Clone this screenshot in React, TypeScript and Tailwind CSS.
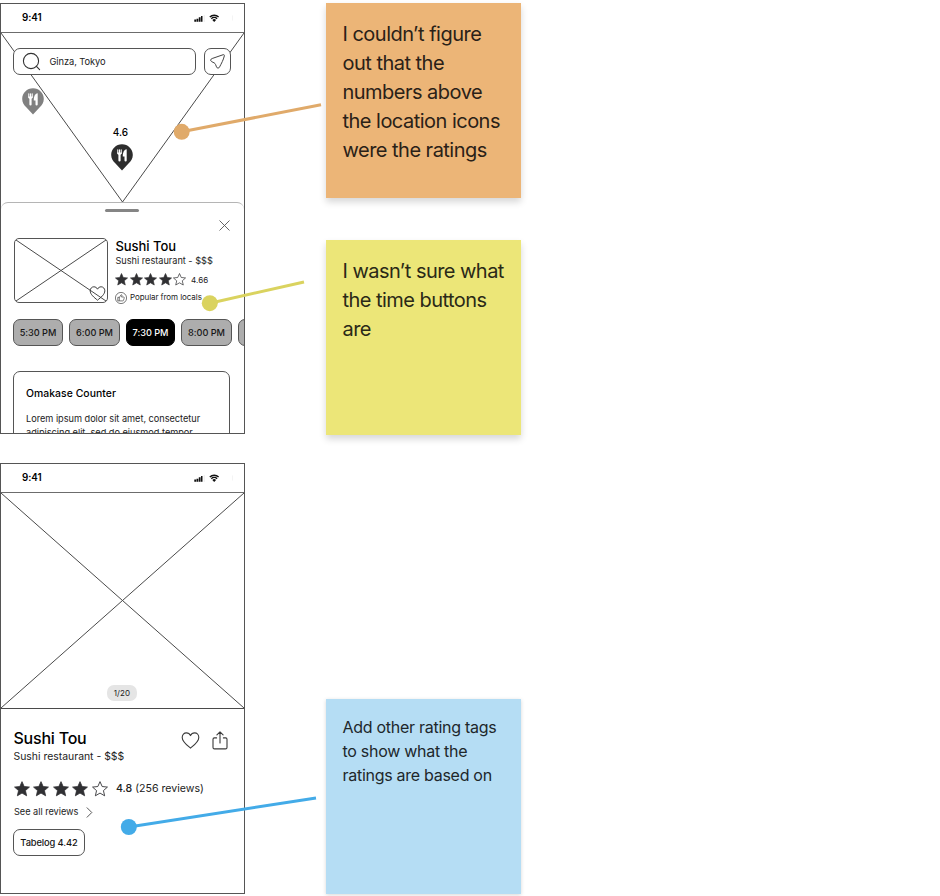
import React from "react";

const STAR =
  "M10 .8L12.7 6.9 19.3 7.6 14.3 12 15.8 18.5 10 15.1 4.2 18.5 5.7 12 .7 7.6 7.3 6.9z";

function Stars({ size, gap }: { size: number; gap: string }) {
  return (
    <div className={`flex ${gap}`}>
      {[0, 1, 2, 3, 4].map((i) => (
        <svg key={i} width={size} height={size} viewBox="0 0 20 20" className="shrink-0">
          <path
            d={STAR}
            fill={i < 4 ? "#303033" : "none"}
            stroke="#303033"
            strokeWidth={i < 4 ? 1 : 1.1}
            strokeLinejoin="round"
          />
        </svg>
      ))}
    </div>
  );
}

function Pin({ color }: { color: string }) {
  return (
    <svg width="22" height="27" viewBox="0 0 22 27" className="block">
      <path
        d="M11 0.2C5 0.2.2 5 .2 10.9c0 3.6 1.8 6.4 4.3 8.6L11 26.4l6.5-6.9c2.5-2.2 4.3-5 4.3-8.6C21.8 5 17 .2 11 .2z"
        fill={color}
      />
      <path
        d="M6.8 5.8v3.4M8.5 5.8v3.4M10.2 5.8v3.4"
        stroke="#fff"
        strokeWidth="1.1"
        strokeLinecap="round"
      />
      <path d="M6.3 8.4h4.4c0 1.4-.5 2-1.1 2.4v5.7a1.1 1.1 0 01-2.2 0v-5.7c-.7-.4-1.1-1-1.1-2.4z" fill="#fff" />
      <path d="M15.7 5.2v11.3a1.1 1.1 0 01-2.2 0v-4h-1.7c0-3.9 1-6.8 3.9-7.3z" fill="#fff" />
    </svg>
  );
}

function Heart({ width, height }: { width: number; height: number }) {
  return (
    <svg width={width} height={height} viewBox="0 0 18 17" className="block">
      <path
        d="M9 16.1C5.2 12.9.7 9.6.7 5.4.7 2.8 2.6.9 4.9.9 6.7.9 8.2 1.9 9 3.6 9.8 1.9 11.3.9 13.1.9c2.3 0 4.2 1.9 4.2 4.5 0 4.2-4.5 7.5-8.3 10.7z"
        fill="none"
        stroke="#3a3a3a"
        strokeWidth="1.1"
        strokeLinejoin="round"
      />
    </svg>
  );
}

function StatusBar() {
  return (
    <div className="flex h-[29px] shrink-0 items-center border-b border-[#6c6c6c] bg-white pl-[21px]">
      <span className="text-[9.8px] leading-[28px] font-semibold tracking-[-0.05px] text-black">9:41</span>
      <svg width="46" height="10" viewBox="0 0 46 10" className="ml-auto mr-[4px]">
        <path d="M.3 6.4h1.8v2.4H.3zM2.5 5.7h1.8v3.1H2.5zM4.8 4.2h1.8v4.6H4.8z" fill="#111" />
        <path d="M7 2.9h1.5v5.9H7z" fill="#111" />
        <path d="M9.8 2h.8v7h-.8z" fill="#e6e6e6" />
        <path d="M20.2 8.9l-1.9-2a2.8 2.8 0 013.8 0z" fill="#111" />
        <path
          d="M15.8 4a6.3 6.3 0 018.8 0M17.3 5.7a4.2 4.2 0 015.8 0"
          fill="none"
          stroke="#111"
          strokeWidth="1.4"
        />
        <path d="M38 2.5h.8v5H38z" fill="#f1f1f1" />
      </svg>
    </div>
  );
}

function TimeSlot({ label, width, active }: { label: string; width: string; active?: boolean }) {
  return (
    <div
      className={`flex h-[27px] shrink-0 items-center justify-center rounded-[7px] border text-[9.2px] font-medium whitespace-nowrap tracking-[-0.05px] ${width} ${
        active ? "border-black bg-black text-white" : "border-[#555] bg-[#adadad] text-[#161616]"
      }`}
    >
      {label}
    </div>
  );
}

function MapScreen() {
  return (
    <div className="flex h-[431px] w-[245px] flex-col overflow-hidden border border-[#555] bg-white">
      <StatusBar />
      <div className="relative h-[169px] shrink-0">
        <svg className="absolute inset-0" width="243" height="170" viewBox="0 0 243 170">
          <path d="M0 0L121.5 169L243 0" fill="none" stroke="#4a4a4a" strokeWidth="1" />
        </svg>
        <div className="relative flex gap-[8px] pt-[15px] pl-[12px]">
          <div className="flex h-[27px] w-[183px] items-center rounded-[7px] border border-[#555] bg-white pl-[8px]">
            <svg width="19" height="19" viewBox="0 0 19 19" fill="none" stroke="#333" strokeWidth="1.1">
              <circle cx="9" cy="9" r="7.6" />
              <path d="M14.2 14.2l3.4 3.4" strokeLinecap="round" />
            </svg>
            <span className="ml-[8.5px] text-[9.3px] leading-[25px] tracking-[-0.08px] text-[#222]">
              Ginza, Tokyo
            </span>
          </div>
          <div className="flex h-[27px] w-[27px] items-center justify-center rounded-[7px] border border-[#555] bg-white">
            <svg width="17" height="17" viewBox="0 0 17 17" fill="none" stroke="#444" strokeWidth="1" strokeLinejoin="round">
              <path d="M14.2 1.7L3.2 5.5C1.3 6.2 1.2 7.7 2.6 8.6l2.6 1.3c.7.4 1 .8 1.3 1.5l1 2.5c.8 1.7 2.2 1.7 3.1 0 1.9-3.6 3.7-6.8 4.7-10.9.2-1.1-.3-1.6-1.1-1.3z" />
            </svg>
          </div>
        </div>
        <div className="absolute top-[55px] left-[20.5px]">
          <Pin color="#808080" />
        </div>
        <div className="absolute top-[92px] left-[110px] flex w-[22px] flex-col items-center">
          <span className="mr-[3px] text-[10px] leading-[14px] font-medium text-black">4.6</span>
          <div className="mt-[5px]">
            <Pin color="#2d2d2d" />
          </div>
        </div>
      </div>
      <div className="flex min-h-0 flex-1 flex-col rounded-t-[7px] border-t border-[#b5b5b5] bg-white">
        <div className="mt-[6px] ml-[104px] h-[3px] w-[34px] shrink-0 rounded-full bg-[#858585]" />
        <svg
          width="11"
          height="11"
          viewBox="0 0 11 11"
          className="mt-[8px] mr-[14px] shrink-0 self-end"
          stroke="#555"
          strokeWidth="0.9"
        >
          <path d="M.5 .5l10 10M10.5 .5l-10 10" />
        </svg>
        <div className="mt-[7px] ml-[13px] flex h-[65px] shrink-0">
          <div className="relative h-[65px] w-[94px] shrink-0 overflow-hidden rounded-[5px] border border-[#555]">
            <svg width="92" height="63" viewBox="0 0 92 63" className="block">
              <path d="M1 1L91 62M91 1L1 62" stroke="#4a4a4a" strokeWidth="1" />
            </svg>
            <div className="absolute right-[1px] bottom-[1px]">
              <Heart width={17} height={15} />
            </div>
          </div>
          <div className="ml-[7px] flex flex-col pt-[1px] whitespace-nowrap">
            <div className="pl-[0.5px] text-[13px] leading-[15px] font-medium tracking-[-0.05px] text-black">
              Sushi Tou
            </div>
            <div className="pl-[0.5px] text-[9.2px] leading-[13px] tracking-[-0.02px] text-[#222]">
              Sushi restaurant - $$$
            </div>
            <div className="flex h-[25px] items-center">
              <Stars size={13} gap="gap-[1.5px]" />
              <span className="ml-[5px] text-[8px] tracking-[0.1px] text-[#222]">4.66</span>
            </div>
            <div className="flex h-[11px] items-center">
              <svg width="12" height="12" viewBox="0 0 12 12" fill="none" stroke="#444" strokeWidth="0.7">
                <circle cx="6" cy="6" r="5.6" />
                <path
                  d="M2.8 5.3h1.5v3.6H2.8zM4.3 5.6L6 2.8c.9-.2 1.2.5.9 1.2l-.4 1h2c.8 0 .9.7.7 1.2l-.8 2.3c-.1.3-.4.4-.7.4H4.3"
                  strokeLinejoin="round"
                />
              </svg>
              <span className="ml-[3px] text-[8px] leading-[11px] tracking-[-0.07px] text-[#222]">
                Popular from locals
              </span>
            </div>
          </div>
        </div>
        <div className="mt-[16px] ml-[12px] flex shrink-0 gap-[6px] overflow-hidden">
          <TimeSlot label="5:30 PM" width="w-[50px]" />
          <TimeSlot label="6:00 PM" width="w-[51px]" />
          <TimeSlot label="7:30 PM" width="w-[49px]" active />
          <TimeSlot label="8:00 PM" width="w-[51px]" />
          <TimeSlot label="" width="w-[50px]" />
        </div>
        <div className="mt-[25px] ml-[12px] h-[120px] w-[217px] shrink-0 rounded-[7px] border border-[#555] px-[12px] pt-[15px]">
          <div className="text-[10.4px] leading-[14px] font-medium tracking-[0.05px] whitespace-nowrap text-black">
            Omakase Counter
          </div>
          <div className="mt-[11px] text-[9.2px] leading-[14px] tracking-[-0.02px] whitespace-nowrap text-[#222]">
            Lorem ipsum dolor sit amet, consectetur
            <br />
            adipiscing elit, sed do eiusmod tempor
          </div>
        </div>
      </div>
    </div>
  );
}

function DetailScreen() {
  return (
    <div className="mt-[29px] flex h-[431px] w-[245px] flex-col overflow-hidden border border-[#555] bg-white">
      <StatusBar />
      <div className="relative h-[216px] shrink-0 border-b border-[#4a4a4a]">
        <svg width="243" height="215" viewBox="0 0 243 215" className="block">
          <path d="M0 0L243 215M243 0L0 215" stroke="#4a4a4a" strokeWidth="1" />
        </svg>
        <div className="absolute bottom-[7px] left-[106px] flex h-[16px] w-[30px] items-center justify-center rounded-[7px] bg-[#e5e5e5] text-[8px] tracking-[0.1px] text-[#222]">
          1/20
        </div>
      </div>
      <div className="flex flex-col pt-[20px] pr-[16px] pl-[12px] whitespace-nowrap">
        <div className="flex justify-between pl-[0.5px]">
          <div>
            <div className="text-[16px] leading-[19px] font-medium tracking-[-0.22px] text-black">Sushi Tou</div>
            <div className="mt-[2px] text-[10.4px] leading-[14px] tracking-[0.01px] text-[#222]">
              Sushi restaurant - $$$
            </div>
          </div>
          <div className="flex gap-[12px] pt-[2px]">
            <div className="pt-[1px]">
              <Heart width={19} height={17} />
            </div>
            <svg width="16" height="19" viewBox="0 0 16 19" fill="none" stroke="#3a3a3a" strokeWidth="1.1" strokeLinecap="round" strokeLinejoin="round">
              <path d="M8 12V1M4.9 3.9L8 .8l3.1 3.1M4.6 6.9H2.4C1.4 6.9 1 7.4 1 8.3v8.1c0 1 .5 1.5 1.5 1.5h11c1 0 1.5-.5 1.5-1.5V8.3c0-.9-.4-1.4-1.4-1.4h-2.2" />
            </svg>
          </div>
        </div>
        <div className="mt-[8px] flex h-[33px] items-center pl-[0.5px]">
          <Stars size={16} gap="gap-[3.5px]" />
          <span className="ml-[8.5px] text-[10.6px] text-[#222]">
            <span className="font-medium">4.8</span> (256 reviews)
          </span>
        </div>
        <div className="flex h-[14px] items-center pl-[1px]">
          <span className="text-[9.2px] leading-[14px] tracking-[-0.03px] text-[#222]">See all reviews</span>
          <svg width="7" height="11" viewBox="0 0 7 11" className="ml-[7.5px]" fill="none" stroke="#444" strokeWidth="0.9">
            <path d="M.8 .5l5 5-5 5" />
          </svg>
        </div>
        <div className="mt-[10px] flex h-[27px] w-[72px] items-center justify-center rounded-[7px] border border-[#555] text-[9.3px] font-medium tracking-[-0.1px] text-[#161616]">
          Tabelog 4.42
        </div>
      </div>
    </div>
  );
}

function Connectors() {
  return (
    <svg className="pointer-events-none absolute inset-0" width="940" height="896" viewBox="0 0 940 896" strokeWidth="3">
      <path d="M181.7 131.8L321 104.8" stroke="#e0aa6a" />
      <circle cx="181.7" cy="131.8" r="8" fill="#e0aa6a" />
      <path d="M209.8 303.2L304 282" stroke="#dad35f" />
      <circle cx="209.8" cy="303.2" r="8" fill="#dad35f" />
      <path d="M128.8 827L316 798" stroke="#43abe8" />
      <circle cx="128.8" cy="827" r="8" fill="#43abe8" />
    </svg>
  );
}

export default function App() {
  return (
    <div className="relative flex h-[896px] w-[940px] overflow-hidden bg-white pt-[3px] font-['Inter',sans-serif]">
      <div className="flex w-[245px] shrink-0 flex-col">
        <MapScreen />
        <DetailScreen />
      </div>
      <div className="ml-[81px] flex w-[195px] shrink-0 flex-col whitespace-nowrap">
        <div className="h-[195px] shrink-0 bg-[#ecb577] pt-[17px] pl-[16.5px] text-[20px] leading-[29px] tracking-[-0.52px] text-[#2a2117] shadow-[0_4px_7px_rgba(0,0,0,0.16)]">
          I couldn’t figure
          <br />
          out that the
          <br />
          numbers above
          <br />
          the location icons
          <br />
          were the ratings
        </div>
        <div className="mt-[42px] h-[195px] shrink-0 bg-[#ece678] pt-[17px] pl-[16.5px] text-[20px] leading-[29px] tracking-[-0.54px] text-[#2a2917] shadow-[0_4px_7px_rgba(0,0,0,0.16)]">
          I wasn’t sure what
          <br />
          the time buttons
          <br />
          are
        </div>
        <div className="mt-[264px] h-[195px] shrink-0 bg-[#b5ddf4] pt-[16px] pl-[16.5px] text-[16px] leading-[24px] tracking-[-0.28px] text-[#20272b] shadow-[0_1px_4px_rgba(0,0,0,0.16)]">
          Add other rating tags
          <br />
          to show what the
          <br />
          ratings are based on
        </div>
      </div>
      <Connectors />
    </div>
  );
}
